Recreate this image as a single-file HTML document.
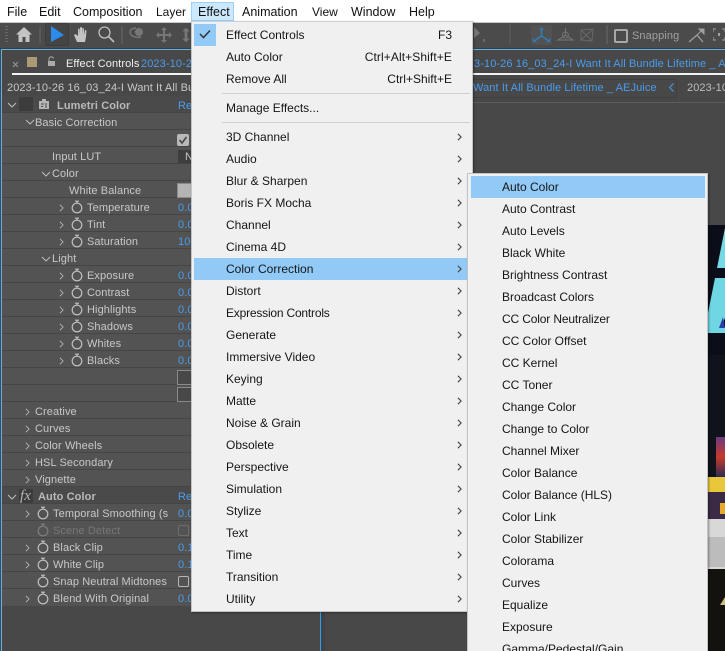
<!DOCTYPE html>
<html><head><meta charset="utf-8"><style>
html,body{margin:0;padding:0;width:725px;height:651px;overflow:hidden}
body{position:relative;background:#484848;font-family:"Liberation Sans",sans-serif;font-size:12px}
div,span,svg{position:absolute}
#root{left:0;top:0;width:725px;height:651px;overflow:hidden;background:#484848}
.t{white-space:nowrap;line-height:16px;color:#c8c8c8;font-size:11px;letter-spacing:.1px;margin-top:1px}
.b{color:#4a9cec}
.m{color:#151515;white-space:nowrap;line-height:16px;font-size:12px}
.k{color:#151515;white-space:nowrap;line-height:16px;text-align:right}
.r{position:absolute;left:2px;width:190px;height:16px;background:#535353;border-bottom:1px solid #454545}
.top{color:#111;line-height:16px;top:4px;white-space:nowrap;font-size:12.5px}
svg[width="6"]{width:5px;height:8px;margin:1px 0 0 1px}
</style></head><body><div id="root">
<svg width="0" height="0"><defs>
<symbol id="sw" viewBox="0 0 12 14"><circle cx="6" cy="8" r="4.8" fill="none" stroke="#c0c0c0" stroke-width="1.2"/><path d="M4 1.2h4M6 1.2v2" stroke="#c0c0c0" stroke-width="1.2" fill="none"/></symbol>
<symbol id="ar" viewBox="0 0 6 10"><path d="M1 1l4 4-4 4" fill="none" stroke="#bdbdbd" stroke-width="1"/></symbol>
<symbol id="dn" viewBox="0 0 10 6"><path d="M1 1l4 4 4-4" fill="none" stroke="#bdbdbd" stroke-width="1"/></symbol>
<symbol id="ma" viewBox="0 0 6 10"><path d="M1 1l4 4-4 4" fill="none" stroke="#444" stroke-width="1.4"/></symbol>
</defs></svg>

<!-- menu bar -->
<div style="left:0;top:0;width:725px;height:22px;background:#fff"></div>
<span class="top" style="left:7px">File</span>
<span class="top" style="left:39px">Edit</span>
<span class="top" style="left:73px">Composition</span>
<span class="top" style="left:156px;font-size:12px">Layer</span>
<div style="left:191px;top:2px;width:41px;height:17px;background:#cce8ff;border:1px solid #99d1ff"></div>
<span class="top" style="left:198px">Effect</span>
<span class="top" style="left:242px">Animation</span>
<span class="top" style="left:312px;font-size:12px">View</span>
<span class="top" style="left:351px">Window</span>
<span class="top" style="left:409px">Help</span>

<!-- toolbar -->
<div style="left:0;top:22px;width:725px;height:26px;background:#4b4b4b"></div>
<div style="left:0;top:22px;width:725px;height:1px;background:#c8c8c8"></div>
<div style="left:5px;top:26px;width:3px;height:18px;background:repeating-linear-gradient(#6a6a6a 0 1px,#4b4b4b 1px 3px)"></div>
<svg style="left:15px;top:26px" width="18" height="17" viewBox="0 0 18 17"><path d="M9 1L1 8.5h2.5V16h4v-5h3v5h4V8.5H17z" fill="#c4c4c4"/></svg>
<div style="left:39px;top:27px;width:2px;height:16px;background:#5a5a5a"></div>
<div style="left:45px;top:23px;width:22px;height:21px;background:#444;border:1px solid #3c3c3c;border-radius:2px"></div>
<svg style="left:50px;top:26px" width="15" height="17" viewBox="0 0 15 17"><path d="M1 0L14 9 1 16z" fill="#2d8ceb"/></svg>
<svg style="left:73px;top:26px" width="17" height="17" viewBox="0 0 17 17"><path d="M4 16L1 9l1.500-1L5 10V3l1.500-.5L7 8V1.500L9 1l.5 7V2l1.500.5V9l1-5 1.500.5L13 11l-1 5z" fill="#c4c4c4"/></svg>
<svg style="left:97px;top:25px" width="18" height="18" viewBox="0 0 18 18"><circle cx="7.500" cy="7.500" r="5.500" fill="none" stroke="#bdbdbd" stroke-width="1.300"/><path d="M11.500 11.500L17 17" stroke="#bdbdbd" stroke-width="1.600"/></svg>
<div style="left:121px;top:26px;width:2px;height:18px;background:#5a5a5a"></div>
<svg style="left:128px;top:26px" width="20" height="18" viewBox="0 0 20 18"><circle cx="11" cy="6" r="4" fill="#777"/><path d="M2 6c0-3 4-4 6-4M2 6c0 4 5 6 11 5" fill="none" stroke="#777" stroke-width="1.400"/></svg>
<svg style="left:155px;top:26px" width="18" height="18" viewBox="0 0 18 18"><path d="M9 1l3 3h-2v4h4V6l3 3-3 3v-2h-4v4h2l-3 3-3-3h2v-4H4v2L1 9l3-3v2h4V4H6z" fill="#777"/></svg>
<svg style="left:181px;top:26px" width="10" height="18" viewBox="0 0 11 18"><path d="M5.500 1l4 4H7v8h2.500l-4 4-4-4H4V5H1.500z" fill="#777"/></svg>

<svg style="left:474px;top:24px" width="16" height="22" viewBox="0 0 16 22"><path d="M0 3l6 6-6 5z" fill="#777"/><path d="M10 18v-3" stroke="#888"/></svg>
<div style="left:509px;top:24px;width:2px;height:20px;background:#555"></div>
<div style="left:531px;top:25px;width:21px;height:20px;background:#525252;border-radius:2px"></div>
<svg style="left:532px;top:27px" width="19" height="17" viewBox="0 0 19 17"><path d="M9.500 1v8M9.500 9L2 14M9.500 9L17 14" stroke="#2f7eb8" stroke-width="1.500" fill="none"/><path d="M7.500 3l2-2 2 2M1 11l.5 3.500 3 .5M18 11l-.5 3.500-3 .5" stroke="#2f7eb8" fill="none"/></svg>
<svg style="left:556px;top:27px" width="19" height="16" viewBox="0 0 19 16"><path d="M9.500 1v7L2 13h15L9.500 8" stroke="#707070" fill="none" stroke-width="1.200"/><circle cx="9.500" cy="8" r="3" fill="none" stroke="#707070"/></svg>
<svg style="left:579px;top:27px" width="16" height="16" viewBox="0 0 16 16"><path d="M2 3l12-1-1 12L2 13zM2 3l11 11M14 2L2 13" stroke="#686868" fill="none"/></svg>
<div style="left:606px;top:25px;width:2px;height:19px;background:#5a5a5a"></div>
<div style="left:614px;top:29px;width:10px;height:10px;border:2px solid #a8a8a8;border-radius:2px"></div>
<span class="t" style="left:632px;top:27px;color:#a0a0a0">Snapping</span>
<svg style="left:687px;top:27px" width="20" height="17" viewBox="0 0 20 17"><path d="M2 15l8-7 6 7" stroke="#a0a0a0" fill="none" stroke-width="1.300"/><path d="M10 8l6-6M12 2h5v5z" fill="#a0a0a0" stroke="#a0a0a0"/></svg>
<svg style="left:713px;top:28px" width="12" height="14" viewBox="0 0 12 14"><path d="M0 4V1h3M9 1h3v3M0 9v3h3M9 12h3V9" stroke="#a0a0a0" fill="none"/><path d="M5 5h2v3H5z" fill="#a0a0a0"/></svg>

<!-- panel tabs -->
<div style="left:0;top:48px;width:725px;height:1px;background:#3c3c3c"></div>
<div style="left:1px;top:49px;width:724px;height:1px;background:#5ab4e8"></div>
<div style="left:1px;top:49px;width:1px;height:602px;background:#5ab4e8"></div>
<svg style="left:12px;top:61px" width="7" height="7" viewBox="0 0 7 7"><path d="M1 1l5 5M6 1L1 6" stroke="#999"/></svg>
<div style="left:27px;top:57px;width:10px;height:10px;background:#ab9a78"></div>
<svg style="left:47px;top:56px" width="9" height="11" viewBox="0 0 9 11"><path d="M1 5h7v5H1z" fill="#aaa"/><path d="M2 5V3a2.300 2.300 0 0 1 4.500-.5" fill="none" stroke="#aaa"/></svg>
<span class="t" style="left:66px;top:55px;color:#f0f0f0">Effect Controls</span>
<span class="t b" style="left:141px;top:55px">2023-10-26 16_03_24</span>
<span class="t b" style="left:474px;top:55px">3-10-26 16_03_24-I Want It All Bundle Lifetime _ A</span>
<div style="left:12px;top:73px;width:713px;height:2px;background:#f2f2f2"></div>
<span class="t" style="left:7px;top:79px;color:#c8c8c8">2023-10-26 16_03_24-I Want It All Bundle</span>
<span class="t b" style="left:473px;top:79px">Want It All Bundle Lifetime _ AEJuice</span>
<div style="left:400px;top:79px;width:276px;height:17px;border:1px solid #3f3f3f;border-left:0;border-radius:2px"></div>
<svg style="left:668px;top:83px" width="7" height="9" viewBox="0 0 6 9"><path d="M5 0.500L1 4.500l4 4" stroke="#4a9cec" fill="none"/></svg>
<span class="t" style="left:687px;top:79px;color:#bdbdbd">2023-10</span>
<div style="left:400px;top:102px;width:325px;height:1px;background:#5c5c5c"></div>

<!-- effect rows -->
<div class="r" style="top:96px;background:#4a4a4a"></div>
<div class="r" style="top:113px"></div>
<div class="r" style="top:130px"></div>
<div class="r" style="top:147px"></div>
<div class="r" style="top:164px"></div>
<div class="r" style="top:181px"></div>
<div class="r" style="top:198px"></div>
<div class="r" style="top:215px"></div>
<div class="r" style="top:232px"></div>
<div class="r" style="top:249px"></div>
<div class="r" style="top:266px"></div>
<div class="r" style="top:283px"></div>
<div class="r" style="top:300px"></div>
<div class="r" style="top:317px"></div>
<div class="r" style="top:334px"></div>
<div class="r" style="top:351px"></div>
<div class="r" style="top:368px"></div>
<div class="r" style="top:385px"></div>
<div class="r" style="top:402px"></div>
<div class="r" style="top:419px"></div>
<div class="r" style="top:436px"></div>
<div class="r" style="top:453px"></div>
<div class="r" style="top:470px"></div>
<div class="r" style="top:487px;background:#4a4a4a"></div>
<div class="r" style="top:504px"></div>
<div class="r" style="top:521px"></div>
<div class="r" style="top:538px"></div>
<div class="r" style="top:555px"></div>
<div class="r" style="top:572px"></div>
<div class="r" style="top:589px;height:17px;border-bottom:0"></div>

<svg style="left:7px;top:102px" width="10" height="6"><use href="#dn"/></svg>
<div style="left:19px;top:97px;width:14px;height:14px;background:#3c3c3c"></div>
<svg style="left:38px;top:98px" width="12" height="12" viewBox="0 0 12 12"><path d="M1 3h3V1h4v2h3v8H1z" fill="#b5b5b5"/><path d="M3 6h3M3 8.500h2M8 5v5" stroke="#4a4a4a"/></svg>
<span class="t" style="left:57px;top:97px;font-weight:bold;color:#b9b9b9">Lumetri Color</span>
<span class="t b" style="left:178px;top:97px">Re</span>
<svg style="left:25px;top:119px" width="10" height="6"><use href="#dn"/></svg>
<span class="t" style="left:35px;top:114px">Basic Correction</span>
<div style="left:177px;top:134px;width:12px;height:12px;background:#b8b8b8;border-radius:2px"></div>
<svg style="left:178px;top:135px" width="10" height="10" viewBox="0 0 10 10"><path d="M1.500 5l2.500 3L8.500 2" stroke="#444" stroke-width="1.600" fill="none"/></svg>
<span class="t" style="left:52px;top:148px">Input LUT</span>
<div style="left:178px;top:150px;width:14px;height:13px;background:#3e3e3e"></div>
<span class="t" style="left:185px;top:148px">N</span>
<svg style="left:41px;top:171px" width="10" height="6"><use href="#dn"/></svg>
<span class="t" style="left:52px;top:165px">Color</span>
<span class="t" style="left:69px;top:182px">White Balance</span>
<div style="left:177px;top:183px;width:15px;height:13px;background:#b4b4b4;border:1px solid #8a8a8a;border-right:0"></div>

<svg style="left:58px;top:203px" width="6" height="10"><use href="#ar"/></svg><svg style="left:71px;top:200px" width="12" height="14"><use href="#sw"/></svg><span class="t" style="left:87px;top:199px">Temperature</span><span class="t b" style="left:178px;top:199px">0.0</span>
<svg style="left:58px;top:220px" width="6" height="10"><use href="#ar"/></svg><svg style="left:71px;top:217px" width="12" height="14"><use href="#sw"/></svg><span class="t" style="left:87px;top:216px">Tint</span><span class="t b" style="left:178px;top:216px">0.0</span>
<svg style="left:58px;top:237px" width="6" height="10"><use href="#ar"/></svg><svg style="left:71px;top:234px" width="12" height="14"><use href="#sw"/></svg><span class="t" style="left:87px;top:233px">Saturation</span><span class="t b" style="left:178px;top:233px">100</span>

<svg style="left:41px;top:256px" width="10" height="6"><use href="#dn"/></svg>
<span class="t" style="left:52px;top:250px">Light</span>

<svg style="left:58px;top:271px" width="6" height="10"><use href="#ar"/></svg><svg style="left:71px;top:268px" width="12" height="14"><use href="#sw"/></svg><span class="t" style="left:87px;top:267px">Exposure</span><span class="t b" style="left:178px;top:267px">0.0</span>
<svg style="left:58px;top:288px" width="6" height="10"><use href="#ar"/></svg><svg style="left:71px;top:285px" width="12" height="14"><use href="#sw"/></svg><span class="t" style="left:87px;top:284px">Contrast</span><span class="t b" style="left:178px;top:284px">0.0</span>
<svg style="left:58px;top:305px" width="6" height="10"><use href="#ar"/></svg><svg style="left:71px;top:302px" width="12" height="14"><use href="#sw"/></svg><span class="t" style="left:87px;top:301px">Highlights</span><span class="t b" style="left:178px;top:301px">0.0</span>
<svg style="left:58px;top:322px" width="6" height="10"><use href="#ar"/></svg><svg style="left:71px;top:319px" width="12" height="14"><use href="#sw"/></svg><span class="t" style="left:87px;top:318px">Shadows</span><span class="t b" style="left:178px;top:318px">0.0</span>
<svg style="left:58px;top:339px" width="6" height="10"><use href="#ar"/></svg><svg style="left:71px;top:336px" width="12" height="14"><use href="#sw"/></svg><span class="t" style="left:87px;top:335px">Whites</span><span class="t b" style="left:178px;top:335px">0.0</span>
<svg style="left:58px;top:356px" width="6" height="10"><use href="#ar"/></svg><svg style="left:71px;top:353px" width="12" height="14"><use href="#sw"/></svg><span class="t" style="left:87px;top:352px">Blacks</span><span class="t b" style="left:178px;top:352px">0.0</span>
<div style="left:177px;top:370px;width:15px;height:13px;background:#484848;border:1px solid #8a8a8a;border-right:0"></div>
<div style="left:177px;top:387px;width:15px;height:13px;background:#484848;border:1px solid #8a8a8a;border-right:0"></div>

<svg style="left:24px;top:407px" width="6" height="10"><use href="#ar"/></svg><span class="t" style="left:35px;top:403px">Creative</span>
<svg style="left:24px;top:424px" width="6" height="10"><use href="#ar"/></svg><span class="t" style="left:35px;top:420px">Curves</span>
<svg style="left:24px;top:441px" width="6" height="10"><use href="#ar"/></svg><span class="t" style="left:35px;top:437px">Color Wheels</span>
<svg style="left:24px;top:458px" width="6" height="10"><use href="#ar"/></svg><span class="t" style="left:35px;top:454px">HSL Secondary</span>
<svg style="left:24px;top:475px" width="6" height="10"><use href="#ar"/></svg><span class="t" style="left:35px;top:471px">Vignette</span>

<svg style="left:7px;top:494px" width="10" height="6"><use href="#dn"/></svg>
<div style="left:19px;top:489px;width:14px;height:14px;background:#3c3c3c"></div>
<span class="t" style="left:20px;top:487px;font:italic 15px/16px 'Liberation Serif',serif;color:#b5b5b5">fx</span>
<span class="t" style="left:38px;top:488px;font-weight:bold;color:#b9b9b9">Auto Color</span>
<span class="t b" style="left:178px;top:488px">Re</span>

<svg style="left:24px;top:509px" width="6" height="10"><use href="#ar"/></svg><svg style="left:37px;top:506px" width="12" height="14"><use href="#sw"/></svg><span class="t" style="left:53px;top:505px">Temporal Smoothing (s</span><span class="t b" style="left:178px;top:505px">0.0</span>
<svg style="left:37px;top:523px;opacity:.4" width="12" height="14"><use href="#sw"/></svg><span class="t" style="left:53px;top:522px;color:#777">Scene Detect</span>
<div style="left:178px;top:525px;width:9px;height:9px;border:1.500px solid #6c6c6c;border-radius:2px"></div>
<svg style="left:24px;top:543px" width="6" height="10"><use href="#ar"/></svg><svg style="left:37px;top:540px" width="12" height="14"><use href="#sw"/></svg><span class="t" style="left:53px;top:539px">Black Clip</span><span class="t b" style="left:178px;top:539px">0.1</span>
<svg style="left:24px;top:560px" width="6" height="10"><use href="#ar"/></svg><svg style="left:37px;top:557px" width="12" height="14"><use href="#sw"/></svg><span class="t" style="left:53px;top:556px">White Clip</span><span class="t b" style="left:178px;top:556px">0.1</span>
<svg style="left:37px;top:574px" width="12" height="14"><use href="#sw"/></svg><span class="t" style="left:53px;top:573px">Snap Neutral Midtones</span>
<div style="left:178px;top:576px;width:9px;height:9px;border:1.500px solid #b5b5b5;border-radius:2px"></div>
<svg style="left:24px;top:594px" width="6" height="10"><use href="#ar"/></svg><svg style="left:37px;top:591px" width="12" height="14"><use href="#sw"/></svg><span class="t" style="left:53px;top:590px">Blend With Original</span><span class="t b" style="left:178px;top:590px">0.0</span>

<!-- centre -->
<div style="left:320px;top:612px;width:1px;height:39px;background:#29a3f0"></div>
<div style="left:321px;top:612px;width:4px;height:39px;background:#434343"></div>

<!-- right image -->
<div style="left:708px;top:225px;width:17px;height:426px;background:#10121c"></div>
<div style="left:708px;top:225px;width:17px;height:130px;background:#0b0d18"></div>
<svg style="left:708px;top:225px" width="17" height="130" viewBox="0 0 17 130"><path d="M17 3L9 43h8z" fill="#76d9e6"/><path d="M7 53h10v40L13 102l4 1v5H0V88z" fill="#6fd6e4"/><path d="M15 92l-4 11h6z" fill="#2b3fa8"/></svg>
<div style="left:716px;top:437px;width:9px;height:40px;background:linear-gradient(#6b3a80,#c63a2a 50%,#2d2a55)"></div>
<div style="left:708px;top:477px;width:17px;height:15px;background:#e8c83a"></div>
<div style="left:708px;top:492px;width:17px;height:27px;background:#3b2a45"></div>
<div style="left:720px;top:503px;width:5px;height:11px;background:#e8a82a"></div>
<div style="left:708px;top:519px;width:17px;height:50px;background:#d8d8d8"></div>
<div style="left:708px;top:537px;width:17px;height:30px;background:#bcbcbc"></div>
<div style="left:708px;top:569px;width:17px;height:82px;background:#14120e"></div>
<svg style="left:720px;top:597px" width="5" height="8"><path d="M5 0v8H0z" fill="#cdbb78"/></svg>

<!-- effect menu -->
<div style="left:191px;top:21px;width:280px;height:589px;background:#f0f0f0;border:1px solid #c4c4c4;border-top:1px solid #d0d0d0;box-shadow:1px 1px 2px rgba(0,0,0,.35)"></div>
<div style="left:194px;top:24px;width:22px;height:22px;background:#91c9f7"></div>
<svg style="left:199px;top:29px" width="12" height="10" viewBox="0 0 12 10"><path d="M1 5l3.500 3.500L11 1.500" fill="none" stroke="#333" stroke-width="1.500"/></svg>
<span class="m" style="left:226px;top:27px">Effect Controls</span><span class="k" style="right:273px;top:27px">F3</span>
<span class="m" style="left:226px;top:49px">Auto Color</span><span class="k" style="right:273px;top:49px;letter-spacing:.1px">Ctrl+Alt+Shift+E</span>
<span class="m" style="left:226px;top:71px">Remove All</span><span class="k" style="right:273px;top:71px">Ctrl+Shift+E</span>
<div style="left:222px;top:93px;width:248px;height:1px;background:#d0d0d0"></div>
<span class="m" style="left:226px;top:100px">Manage Effects...</span>
<div style="left:222px;top:122px;width:248px;height:1px;background:#d0d0d0"></div>
<div style="left:194px;top:258px;width:274px;height:22px;background:#91c9f7"></div>

<span class="m" style="left:226px;top:129px">3D Channel</span><svg style="left:456px;top:132px" width="6" height="10"><use href="#ma"/></svg>
<span class="m" style="left:226px;top:151px">Audio</span><svg style="left:456px;top:154px" width="6" height="10"><use href="#ma"/></svg>
<span class="m" style="left:226px;top:173px">Blur &amp; Sharpen</span><svg style="left:456px;top:176px" width="6" height="10"><use href="#ma"/></svg>
<span class="m" style="left:226px;top:195px">Boris FX Mocha</span><svg style="left:456px;top:198px" width="6" height="10"><use href="#ma"/></svg>
<span class="m" style="left:226px;top:217px">Channel</span><svg style="left:456px;top:220px" width="6" height="10"><use href="#ma"/></svg>
<span class="m" style="left:226px;top:239px">Cinema 4D</span><svg style="left:456px;top:242px" width="6" height="10"><use href="#ma"/></svg>
<span class="m" style="left:226px;top:261px">Color Correction</span><svg style="left:456px;top:264px" width="6" height="10"><use href="#ma"/></svg>
<span class="m" style="left:226px;top:283px">Distort</span><svg style="left:456px;top:286px" width="6" height="10"><use href="#ma"/></svg>
<span class="m" style="left:226px;top:305px;letter-spacing:-.2px">Expression Controls</span><svg style="left:456px;top:308px" width="6" height="10"><use href="#ma"/></svg>
<span class="m" style="left:226px;top:327px">Generate</span><svg style="left:456px;top:330px" width="6" height="10"><use href="#ma"/></svg>
<span class="m" style="left:226px;top:349px">Immersive Video</span><svg style="left:456px;top:352px" width="6" height="10"><use href="#ma"/></svg>
<span class="m" style="left:226px;top:371px">Keying</span><svg style="left:456px;top:374px" width="6" height="10"><use href="#ma"/></svg>
<span class="m" style="left:226px;top:393px">Matte</span><svg style="left:456px;top:396px" width="6" height="10"><use href="#ma"/></svg>
<span class="m" style="left:226px;top:415px">Noise &amp; Grain</span><svg style="left:456px;top:418px" width="6" height="10"><use href="#ma"/></svg>
<span class="m" style="left:226px;top:437px">Obsolete</span><svg style="left:456px;top:440px" width="6" height="10"><use href="#ma"/></svg>
<span class="m" style="left:226px;top:459px">Perspective</span><svg style="left:456px;top:462px" width="6" height="10"><use href="#ma"/></svg>
<span class="m" style="left:226px;top:481px">Simulation</span><svg style="left:456px;top:484px" width="6" height="10"><use href="#ma"/></svg>
<span class="m" style="left:226px;top:503px">Stylize</span><svg style="left:456px;top:506px" width="6" height="10"><use href="#ma"/></svg>
<span class="m" style="left:226px;top:525px">Text</span><svg style="left:456px;top:528px" width="6" height="10"><use href="#ma"/></svg>
<span class="m" style="left:226px;top:547px">Time</span><svg style="left:456px;top:550px" width="6" height="10"><use href="#ma"/></svg>
<span class="m" style="left:226px;top:569px">Transition</span><svg style="left:456px;top:572px" width="6" height="10"><use href="#ma"/></svg>
<span class="m" style="left:226px;top:591px">Utility</span><svg style="left:456px;top:594px" width="6" height="10"><use href="#ma"/></svg>

<!-- submenu -->
<div style="left:467px;top:173px;width:239px;height:478px;background:#f0f0f0;border:1px solid #c4c4c4;border-bottom:0;box-shadow:1px 1px 2px rgba(0,0,0,.35)"></div>
<div style="left:471px;top:176px;width:234px;height:22px;background:#91c9f7"></div>
<span class="m" style="left:502px;top:179px">Auto Color</span>
<span class="m" style="left:502px;top:201px">Auto Contrast</span>
<span class="m" style="left:502px;top:223px">Auto Levels</span>
<span class="m" style="left:502px;top:245px">Black  White</span>
<span class="m" style="left:502px;top:267px">Brightness  Contrast</span>
<span class="m" style="left:502px;top:289px">Broadcast Colors</span>
<span class="m" style="left:502px;top:311px;letter-spacing:-.15px">CC Color Neutralizer</span>
<span class="m" style="left:502px;top:333px">CC Color Offset</span>
<span class="m" style="left:502px;top:355px">CC Kernel</span>
<span class="m" style="left:502px;top:377px">CC Toner</span>
<span class="m" style="left:502px;top:399px">Change Color</span>
<span class="m" style="left:502px;top:421px">Change to Color</span>
<span class="m" style="left:502px;top:443px">Channel Mixer</span>
<span class="m" style="left:502px;top:465px">Color Balance</span>
<span class="m" style="left:502px;top:487px">Color Balance (HLS)</span>
<span class="m" style="left:502px;top:509px">Color Link</span>
<span class="m" style="left:502px;top:531px">Color Stabilizer</span>
<span class="m" style="left:502px;top:553px">Colorama</span>
<span class="m" style="left:502px;top:575px">Curves</span>
<span class="m" style="left:502px;top:597px">Equalize</span>
<span class="m" style="left:502px;top:619px">Exposure</span>
<span class="m" style="left:502px;top:641px">Gamma/Pedestal/Gain</span>
</div></body></html>
